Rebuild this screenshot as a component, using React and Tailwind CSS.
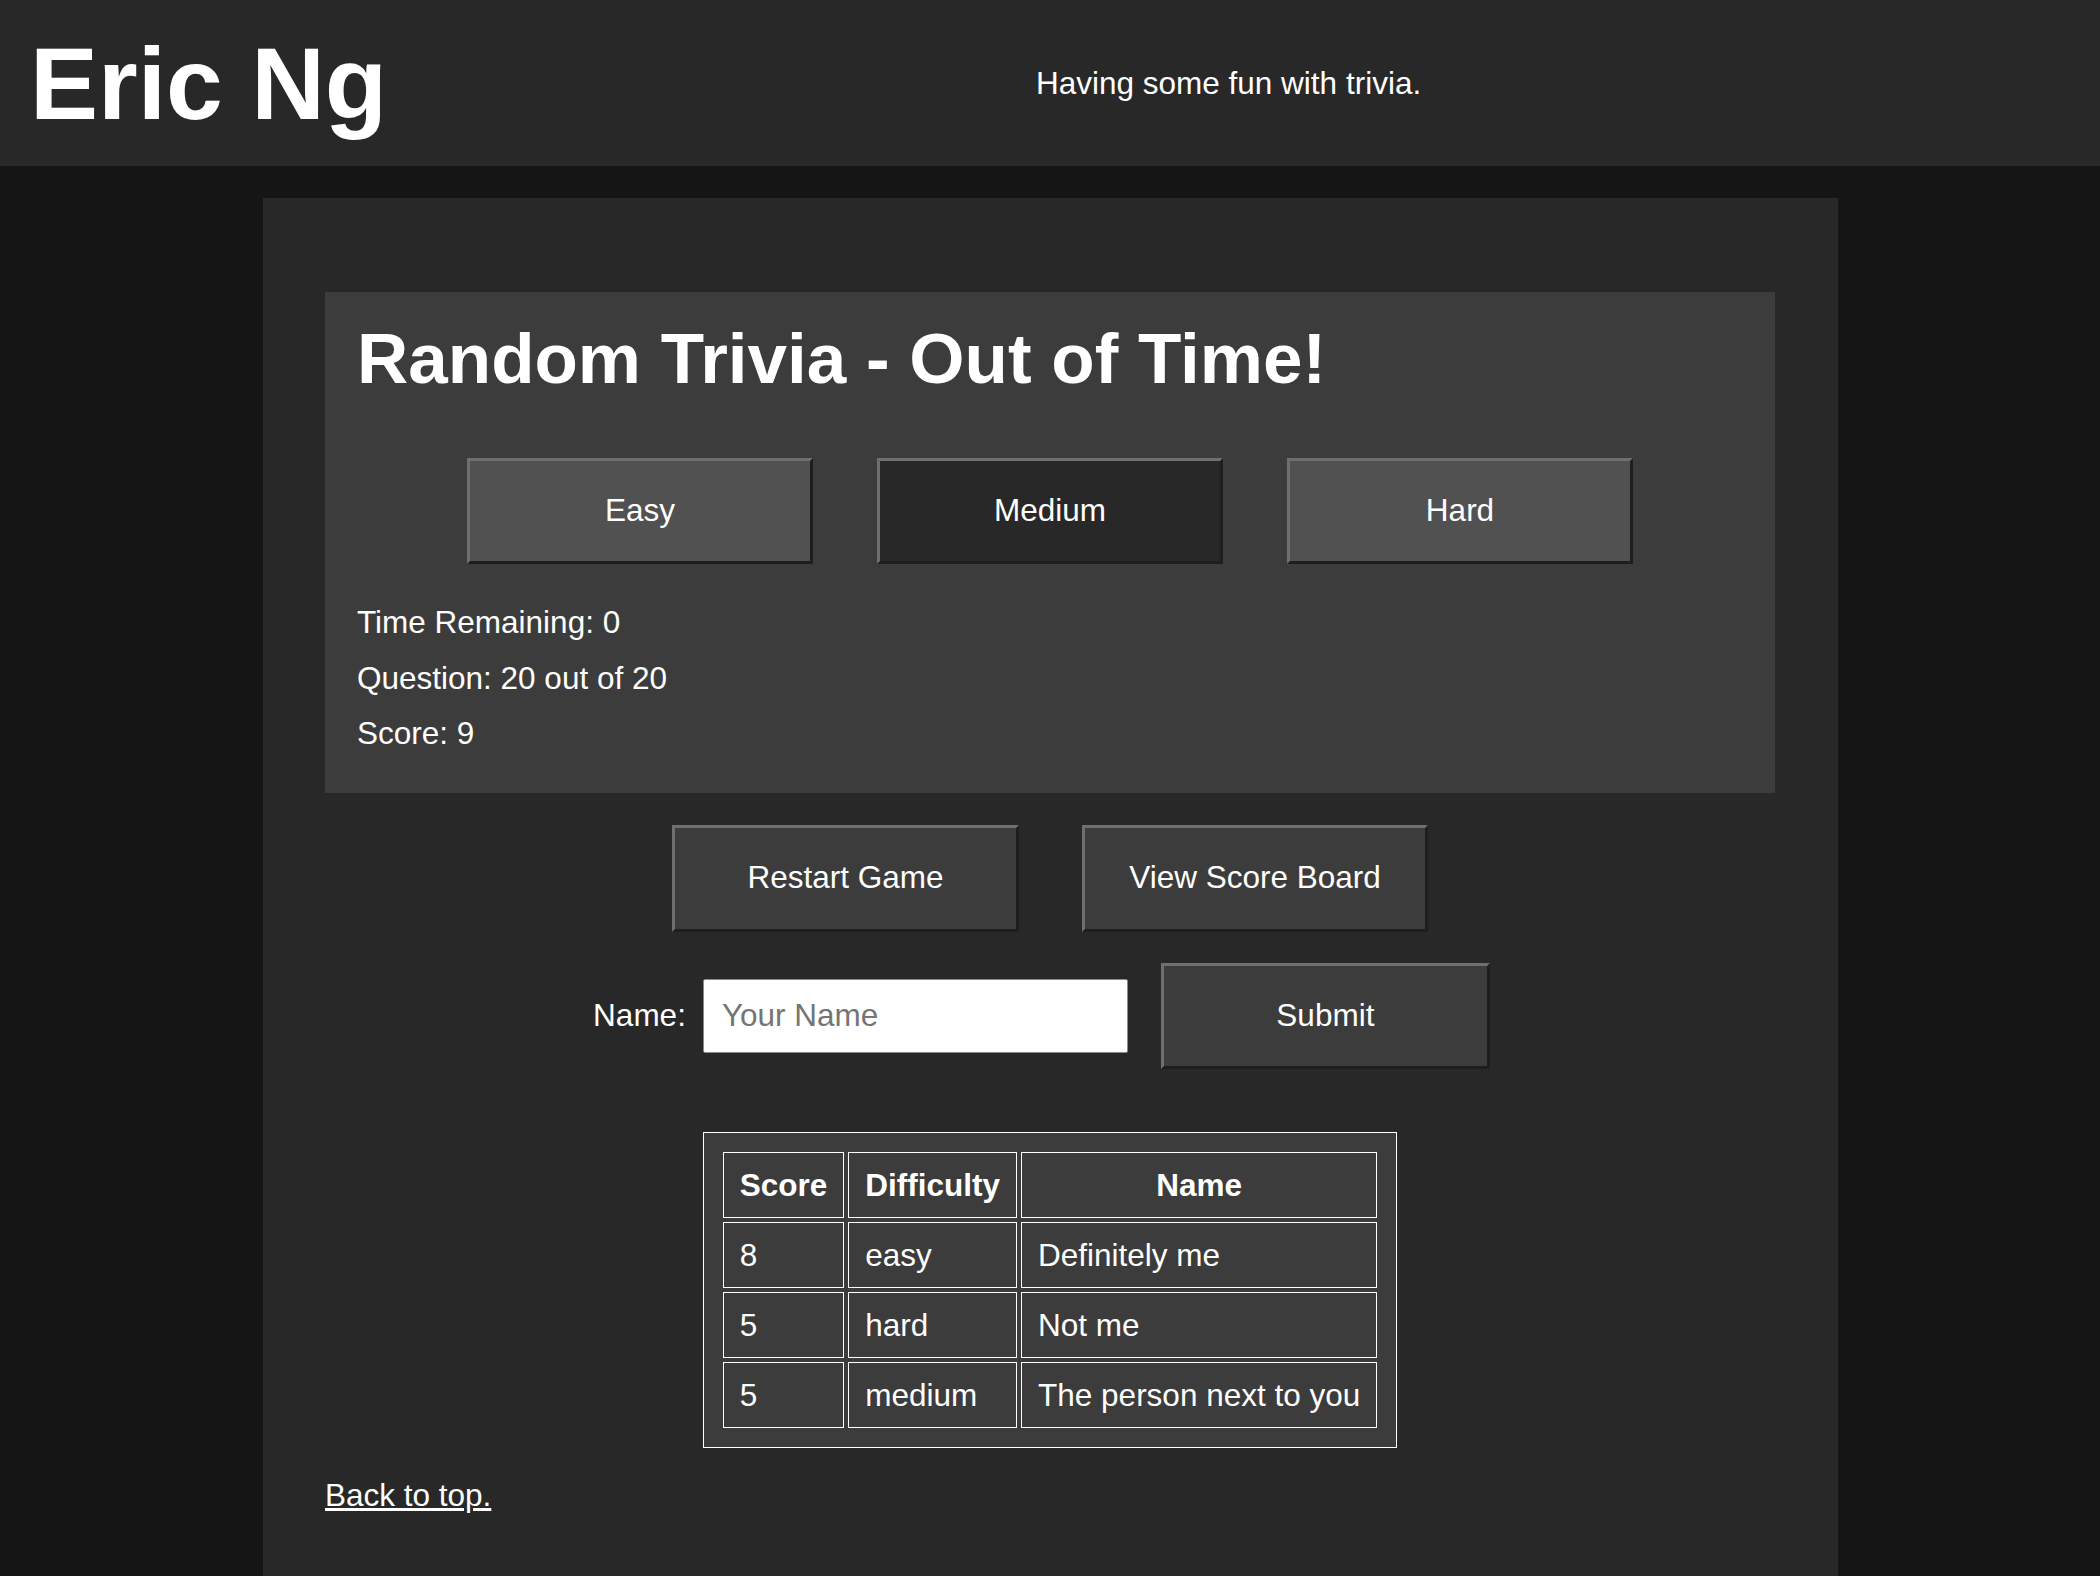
import React from "react";

const btnBase =
  "h-[106px] border-[3px] border-t-[#6f6f6f] border-l-[#6f6f6f] border-b-[#1e1e1e] border-r-[#1e1e1e] text-[31.5px] text-white leading-none flex items-center justify-center";

export default function App() {
  const rows = [
    ["8", "easy", "Definitely me"],
    ["5", "hard", "Not me"],
    ["5", "medium", "The person next to you"],
  ];
  return (
    <div className="min-h-screen bg-[#151515] text-white font-['Liberation_Sans',Arial,sans-serif]">
      <header className="h-[166px] bg-[#282828] flex items-center">
        <h1 className="w-[1036px] pl-[30px] text-[102px] font-bold leading-none mt-[2px]">
          Eric Ng
        </h1>
        <p className="text-[31.5px] leading-none mt-[1px]">Having some fun with trivia.</p>
      </header>

      <main className="mx-auto mt-[32px] w-[75%] bg-[#282828] px-[62.5px] pt-[94px] pb-[80px]">
        <section className="bg-[#3c3c3c] pl-[32px] pr-[32px] pt-[31px] pb-[43px]">
          <h2 className="text-[71px] font-bold leading-none">Random Trivia - Out of Time!</h2>
          <div className="mt-[64px] flex justify-center gap-[64px]">
            <button className={`${btnBase} w-[346px] bg-[#515151]`}>Easy</button>
            <button className={`${btnBase} w-[346px] bg-[#282828]`}>Medium</button>
            <button className={`${btnBase} w-[346px] bg-[#515151]`}>Hard</button>
          </div>
          <div className="mt-[43px] flex flex-col gap-[24px] text-[31.5px] leading-none">
            <p>Time Remaining: 0</p>
            <p>Question: 20 out of 20</p>
            <p>Score: 9</p>
          </div>
        </section>

        <div className="mt-[32px] flex justify-center gap-[63px]">
          <button className={`${btnBase} w-[347px] !h-[107px] bg-[#3c3c3c]`}>Restart Game</button>
          <button className={`${btnBase} w-[346px] !h-[107px] bg-[#3c3c3c]`}>View Score Board</button>
        </div>

        <div className="mt-[31px] flex items-center justify-center pr-[17px]">
          <label className="text-[31.5px] leading-none">Name:</label>
          <input
            type="text"
            placeholder="Your Name"
            className="ml-[17px] w-[425px] h-[74px] bg-white border border-[#8a8a8a] rounded-[2px] px-[18px] text-[31.5px] text-black placeholder:text-[#757575] outline-none"
          />
          <button className={`${btnBase} ml-[33px] w-[329px] bg-[#3c3c3c]`}>Submit</button>
        </div>

        <div className="mt-[63px] flex justify-center">
          <table className="border border-white bg-[#3c3c3c] border-separate border-spacing-[4px] p-[15px] text-[31.5px]">
            <thead>
              <tr>
                <th className="border border-white px-[16px] py-[14px] leading-[36px] font-bold text-center">Score</th>
                <th className="border border-white px-[16px] py-[14px] leading-[36px] font-bold text-center">Difficulty</th>
                <th className="border border-white px-[16px] py-[14px] leading-[36px] font-bold text-center">Name</th>
              </tr>
            </thead>
            <tbody>
              {rows.map((r, i) => (
                <tr key={i}>
                  {r.map((c, j) => (
                    <td key={j} className="border border-white px-[16px] py-[14px] leading-[36px] text-left">
                      {c}
                    </td>
                  ))}
                </tr>
              ))}
            </tbody>
          </table>
        </div>

        <div className="mt-[32px] text-[31.5px] leading-none">
          <a href="#" className="underline text-white">Back to top.</a>
        </div>
      </main>
    </div>
  );
}
